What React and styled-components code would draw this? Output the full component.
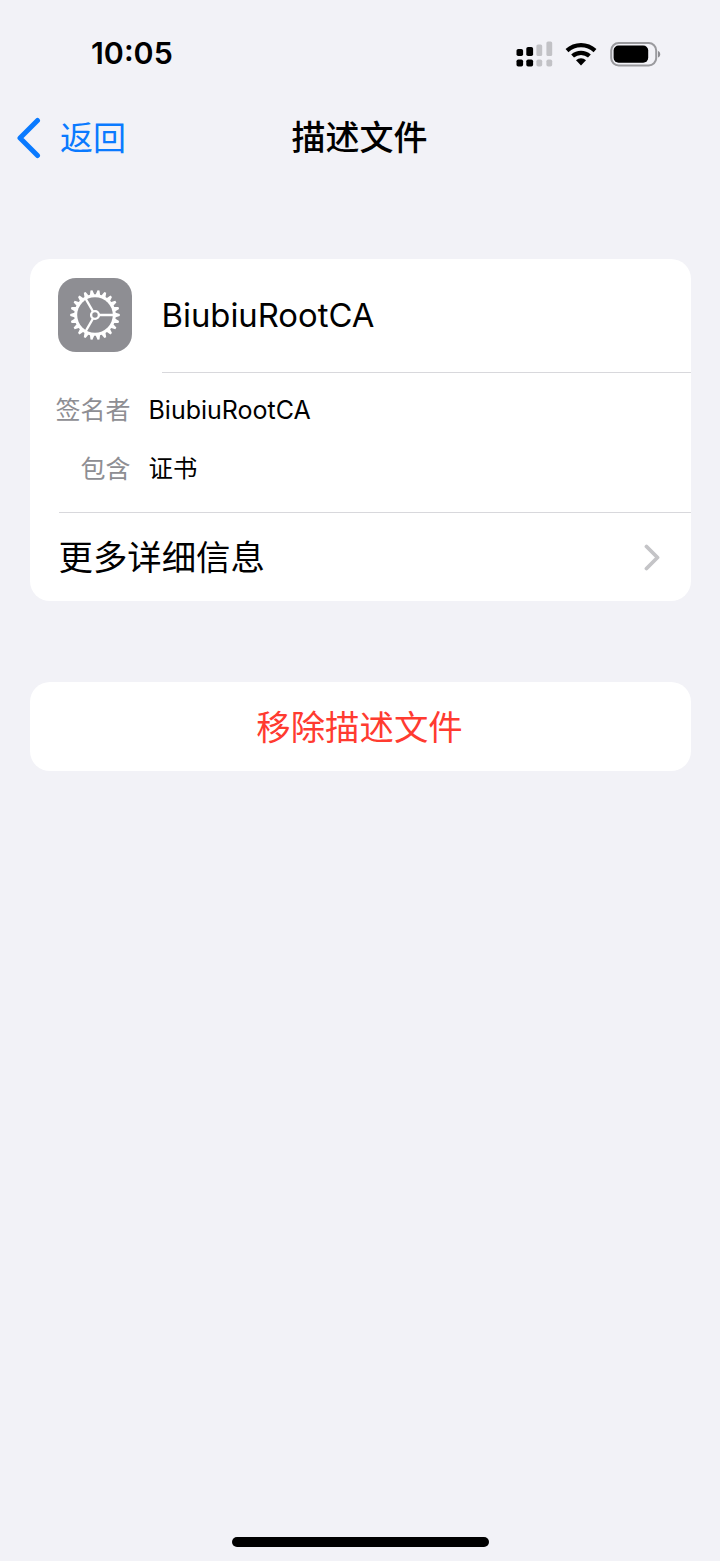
import React from 'react';
import styled, { createGlobalStyle } from 'styled-components';

const FONT = `Inter, "Noto Sans CJK SC", sans-serif`;

const Global = createGlobalStyle`
  html, body {
    margin: 0;
    padding: 0;
    background: #f2f2f7;
  }
  body {
    font-family: ${FONT};
    color: #000;
  }
`;

const Screen = styled.div`
  width: 720px;
  height: 1561px;
  display: flex;
  flex-direction: column;
  background: #f2f2f7;
  overflow: hidden;
`;

const StatusBar = styled.div`
  height: 106px;
  box-sizing: border-box;
  padding: 32px 59px 0 91px;
  display: flex;
  justify-content: space-between;
  align-items: flex-start;
`;

const Time = styled.span`
  font-size: 30.4px;
  line-height: 43px;
  font-weight: 600;
`;

const StatusIcons = styled.div`
  display: flex;
  align-items: center;
  gap: 12px;
  height: 43px;
`;

const NavBar = styled.div`
  height: 63px;
  display: grid;
  grid-template-columns: 1fr auto 1fr;
  align-items: center;
`;

const BackLink = styled.div`
  display: flex;
  align-items: center;
  gap: 19.5px;
  padding-left: 15.5px;
  color: #0a7aff;
  font-size: 33px;
`;

const CjkText = styled.span`
  padding-bottom: 4px;
`;

const NavTitle = styled.div`
  font-size: 34px;
  font-weight: 500;
  padding: 0 1px 4px 0;
`;

const Content = styled.div`
  flex: 1;
  display: flex;
  flex-direction: column;
  gap: 81px;
  padding: 90px 29.5px 0;
`;

const Card = styled.div`
  background: #fff;
  border-radius: 20px;
  overflow: hidden;
`;

const ProfileRow = styled.div`
  display: flex;
  align-items: center;
  gap: 29.5px;
  height: 114px;
  padding-left: 28.5px;
`;

const AppIcon = styled.div`
  width: 74px;
  height: 74px;
  flex: none;
  margin-bottom: 2px;
  border-radius: 18px;
  background: #8e8e93;
  display: flex;
  align-items: center;
  justify-content: center;
`;

const ProfileName = styled.div`
  flex: 1;
  align-self: stretch;
  box-sizing: border-box;
  padding-bottom: 1px;
  display: flex;
  align-items: center;
  font-size: 32.8px;
  border-bottom: 1px solid #d8d8dc;
`;

const Details = styled.div`
  padding: 7px 0 14px;
  display: flex;
  flex-direction: column;
`;

const DetailRow = styled.div`
  display: grid;
  grid-template-columns: 101px 1fr;
  column-gap: 18px;
  align-items: center;
  height: 59px;
`;

const DetailLabel = styled.div`
  text-align: right;
  font-size: 25px;
  color: #8e8e93;
  padding-bottom: 4px;
`;

const DetailValue = styled.div`
  font-size: ${(p) => (p.$cjk ? '24.4px' : '25px')};
  padding-bottom: ${(p) => (p.$cjk ? '4px' : '0')};
`;

const MoreRow = styled.div`
  margin-left: 29px;
  height: 88px;
  padding-right: 30px;
  display: flex;
  align-items: center;
  justify-content: space-between;
  font-size: 34.4px;
  border-top: 1px solid #d8d8dc;
`;

const RemoveButton = styled(Card)`
  height: 89px;
  padding-right: 1px;
  display: flex;
  align-items: center;
  justify-content: center;
  color: #ff3b30;
  font-size: 34.4px;
`;

const HomeBar = styled.div`
  width: 257px;
  height: 10px;
  margin: 0 auto 14px;
  border-radius: 5px;
  background: #000;
`;

// cog outline, pointed teeth around a thin ring
const gearPath = () => {
  const teeth = 22;
  const step = (Math.PI * 2) / teeth;
  const pts = [];
  for (let i = 0; i < teeth; i += 1) {
    const a = i * step;
    [[-0.36, 20.8], [-0.14, 24.8], [0.14, 24.8], [0.36, 20.8]].forEach(([o, r]) => {
      const t = a + o * step;
      pts.push(`${(r * Math.cos(t)).toFixed(2)} ${(r * Math.sin(t)).toFixed(2)}`);
    });
  }
  return `M${pts.join('L')}Z`;
};

const Gear = () => (
  <svg width="50" height="50" viewBox="-25 -25 50 50">
    <path d={gearPath()} fill="#fff" />
    <circle r="17.8" fill="#8e8e93" />
    <g stroke="#fff" strokeWidth="2.4">
      <line x1="4" y1="0" x2="19" y2="0" />
      <line x1="-2" y1="3.5" x2="-9.5" y2="16.5" />
      <line x1="-2" y1="-3.5" x2="-9.5" y2="-16.5" />
    </g>
    <circle r="3.9" fill="none" stroke="#fff" strokeWidth="2.4" />
  </svg>
);

const Signal = () => (
  <svg width="38" height="26" viewBox="0 0 38 26">
    <g fill="#000">
      <rect x="1.5" y="8" width="6.6" height="7" rx="1.8" />
      <rect x="11.3" y="6" width="6.8" height="9" rx="1.8" />
      <rect x="1.5" y="18.5" width="6.6" height="7" rx="1.8" />
      <rect x="11.3" y="18.5" width="6.8" height="7" rx="1.8" />
    </g>
    <g fill="#c2c2c6">
      <rect x="21.4" y="3.5" width="5.8" height="11.5" rx="1.6" />
      <rect x="31.4" y="0.5" width="5.8" height="14.5" rx="1.6" />
      <rect x="21.4" y="18.5" width="5.8" height="7" rx="1.8" />
      <rect x="31.4" y="18.5" width="5.8" height="7" rx="1.8" />
    </g>
  </svg>
);

const Wifi = () => (
  <svg width="32" height="24" viewBox="0 0 32 24">
    <g fill="none" stroke="#000" strokeWidth="4.2">
      <path d="M2 8.6 A20.5 20.5 0 0 1 30 8.6" />
      <path d="M7.6 14 A12.6 12.6 0 0 1 24.4 14" />
    </g>
    <path d="M11 18.2 A7.4 7.4 0 0 1 21 18.2 L16 23.6Z" fill="#000" />
  </svg>
);

const Battery = () => (
  <svg width="52" height="26" viewBox="0 0 52 26">
    <rect x="2.2" y="2" width="45" height="22.4" rx="7.5" fill="none" stroke="#9a9a9e" strokeWidth="2" />
    <rect x="4.6" y="4.5" width="34.6" height="17.2" rx="5" fill="#000" />
    <path d="M49 10 C50.6 10.6 51.2 11.8 51.2 13.2 C51.2 14.6 50.6 15.8 49 16.4Z" fill="#8e8e93" />
  </svg>
);

const BackChevron = () => (
  <svg width="25" height="42" viewBox="0 0 25 42">
    <path d="M21.5 3.5 L4 21 L21.5 38.5" fill="none" stroke="#0a7aff" strokeWidth="5" strokeLinecap="round" strokeLinejoin="round" />
  </svg>
);

const RowChevron = () => (
  <svg width="17" height="27" viewBox="0 0 17 27">
    <path d="M2.5 2.5 L13.5 13.5 L2.5 24.5" fill="none" stroke="#c4c4c7" strokeWidth="3.8" strokeLinecap="round" strokeLinejoin="round" />
  </svg>
);

const App = () => (
  <Screen>
    <Global />
    <StatusBar>
      <Time>10:05</Time>
      <StatusIcons>
        <Signal />
        <Wifi />
        <Battery />
      </StatusIcons>
    </StatusBar>
    <NavBar>
      <BackLink>
        <BackChevron />
        <CjkText>返回</CjkText>
      </BackLink>
      <NavTitle>描述文件</NavTitle>
    </NavBar>
    <Content>
      <Card>
        <ProfileRow>
          <AppIcon>
            <Gear />
          </AppIcon>
          <ProfileName>BiubiuRootCA</ProfileName>
        </ProfileRow>
        <Details>
          <DetailRow>
            <DetailLabel>签名者</DetailLabel>
            <DetailValue>BiubiuRootCA</DetailValue>
          </DetailRow>
          <DetailRow>
            <DetailLabel>包含</DetailLabel>
            <DetailValue $cjk>证书</DetailValue>
          </DetailRow>
        </Details>
        <MoreRow>
          <CjkText>更多详细信息</CjkText>
          <RowChevron />
        </MoreRow>
      </Card>
      <RemoveButton>
        <CjkText>移除描述文件</CjkText>
      </RemoveButton>
    </Content>
    <HomeBar />
  </Screen>
);

export default App;
